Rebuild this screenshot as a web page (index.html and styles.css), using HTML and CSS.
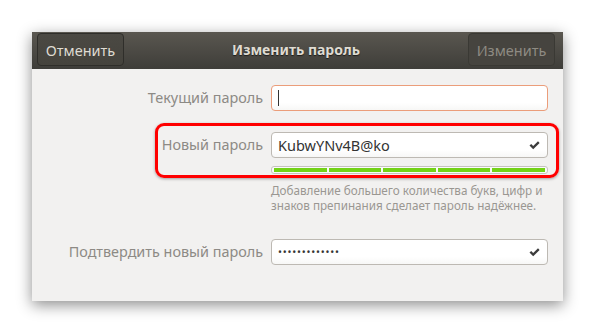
FILE: index.html
```html
<!DOCTYPE html>
<html lang="ru">
<head>
    <meta charset="UTF-8">
    <meta name="viewport" content="width=device-width, initial-scale=1.0">
    <title>Изменить пароль</title>
    <link rel="stylesheet" href="styles.css">
</head>
<body>
    <div class="dialog">
        <div class="header-bar">
            <button class="hb-button">Отменить</button>
            <div class="title">Изменить пароль</div>
            <button class="hb-button disabled">Изменить</button>
        </div>

        <div class="dialog-body">
            <div class="form-grid">
                <label class="field-label">Текущий пароль</label>
                <div class="entry focused"><span class="caret"></span></div>

                <label class="field-label">Новый пароль</label>
                <div class="new-field">
                    <div class="entry">
                        <span class="entry-text">KubwYNv4B@ko</span>
                        <svg class="check" width="11" height="9" viewBox="0 0 11 9"><path d="M0.5 4.6 L2.2 3 L4.2 5 L9 0.3 L10.6 1.9 L4.2 8.3 Z" fill="#3c3c3c"/></svg>
                    </div>
                    <div class="strength">
                        <span class="seg"></span><span class="seg"></span><span class="seg"></span><span class="seg"></span><span class="seg"></span>
                    </div>
                    <p class="hint">Добавление большего количества букв, цифр и знаков препинания сделает пароль надёжнее.</p>
                </div>

                <label class="field-label">Подтвердить новый пароль</label>
                <div class="entry">
                    <span class="dots">•••••••••••••</span>
                    <svg class="check" width="11" height="9" viewBox="0 0 11 9"><path d="M0.5 4.6 L2.2 3 L4.2 5 L9 0.3 L10.6 1.9 L4.2 8.3 Z" fill="#3c3c3c"/></svg>
                </div>
            </div>

            <!-- red highlight drawn over the new password row -->
            <div class="highlight"></div>
        </div>
    </div>
</body>
</html>
```

FILE: styles.css
```css
* {
    margin: 0;
    padding: 0;
    box-sizing: border-box;
}

body {
    font-family: "Noto Sans", "Open Sans", sans-serif;
    background-color: #fff;
    padding: 32px 0 0 32px;
    height: 333px;
    overflow: hidden;
}

.dialog {
    width: 531px;
    height: 269px;
    background-color: #f2f1f0;
    box-shadow: 0 4px 14px rgba(0, 0, 0, 0.45);
    display: flex;
    flex-direction: column;
}

.header-bar {
    height: 37px;
    background: linear-gradient(#5a5750, #3e3d39);
    display: flex;
    align-items: flex-start;
    justify-content: space-between;
    padding: 1px 8px 0 5px;
}

.hb-button {
    height: 33px;
    width: 87px;
    font-family: inherit;
    font-size: 14.5px;
    color: #dfdbd2;
    background: linear-gradient(#4b4943, #45433d);
    border: 1px solid #2f2e2a;
    border-radius: 4px;
}

.hb-button.disabled {
    color: #8e8b83;
    background: #46443f;
    border-color: #3a3934;
}

.title {
    font-size: 14px;
    font-weight: bold;
    color: #dfdbd2;
    line-height: 33px;
    text-shadow: 0 1px 1px rgba(0, 0, 0, 0.6);
}

.dialog-body {
    position: relative;
    flex: 1;
    padding: 16px 15px 0 0;
}

.form-grid {
    display: grid;
    grid-template-columns: 1fr 277px;
    column-gap: 8px;
    row-gap: 21px;
    align-items: start;
}

.field-label {
    text-align: right;
    font-size: 14.4px;
    color: #8d8a85;
    line-height: 26px;
}

.entry {
    height: 26px;
    background: linear-gradient(#fff 70%, #f7f7f6);
    border: 1px solid #bdb9b3;
    border-radius: 4px;
    display: flex;
    align-items: center;
    padding: 0 6px;
}

.entry.focused {
    border-color: #eb9d7a;
}

.caret {
    width: 1px;
    height: 16px;
    background-color: #333;
}

.entry-text {
    font-size: 14.5px;
    color: #333;
    flex: 1;
}

.dots {
    flex: 1;
    font-size: 10.5px;
    color: #333;
    letter-spacing: 0.8px;
}

.check {
    margin-left: auto;
    margin-right: 1px;
}

.strength {
    margin-top: 8px;
    height: 8px;
    border: 1px solid #c6c3be;
    border-radius: 3px;
    background-color: #fafafa;
    display: flex;
    gap: 2px;
    padding: 1px 2px;
}

.seg {
    flex: 1;
    background-color: #73d216;
}

.hint {
    margin-top: 9px;
    margin-bottom: 6px;
    font-size: 11.7px;
    line-height: 14.5px;
    color: #9a9792;
    padding-right: 2px;
}

.highlight {
    position: absolute;
    left: 123px;
    top: 54px;
    width: 404px;
    height: 55px;
    border: 3px solid #f00;
    border-radius: 9px;
    box-shadow: 0 1px 3px rgba(0, 0, 0, 0.35);
    pointer-events: none;
}
```
